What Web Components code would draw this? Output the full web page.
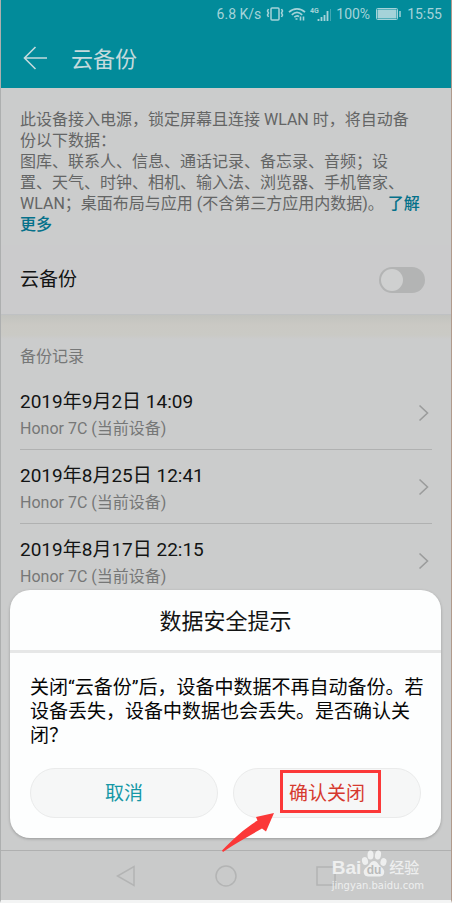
<!DOCTYPE html>
<html lang="zh-CN">
<head>
<meta charset="utf-8">
<meta name="viewport" content="width=device-width, initial-scale=1">
<title>云备份</title>
<style>
  body {
    margin: 0;
    background: #f3f4f4;
    font-family: Roboto, "Noto Sans CJK SC", sans-serif;
  }
</style>
</head>
<body>

<phone-screen>
  <status-bar slot="top"></status-bar>
  <app-bar slot="top">云备份</app-bar>

  <backup-info>
    此设备接入电源，锁定屏幕且连接 WLAN 时，将自动备<br>份以下数据：<br>图库、联系人、信息、通话记录、备忘录、音频；设<br>置、天气、时钟、相机、输入法、浏览器、手机管家、<br>WLAN；桌面布局与应用 (不含第三方应用内数据)。 <a href="#more">了解<br>更多</a>
  </backup-info>
  <switch-row>云备份</switch-row>
  <record-list>
    <span slot="title">备份记录</span>
    <record-row>2019年9月2日 14:09<span slot="device">Honor 7C (当前设备)</span></record-row>
    <record-row>2019年8月25日 12:41<span slot="device">Honor 7C (当前设备)</span></record-row>
    <record-row>2019年8月17日 22:15<span slot="device">Honor 7C (当前设备)</span></record-row>
  </record-list>

  <bottom-dialog slot="overlay">
    <span slot="title">数据安全提示</span>
    关闭“云备份”后，设备中数据不再自动备份。若<br>设备丢失，设备中数据也会丢失。是否确认关<br>闭？
    <dialog-button slot="actions">取消</dialog-button>
    <dialog-button slot="actions" danger marked>确认关闭</dialog-button>
  </bottom-dialog>
  <nav-bar slot="bottom"></nav-bar>
  <water-mark slot="overlay"></water-mark>
</phone-screen>

<script>
  (function (customElements) {
    'use strict';

    // Registers an element that only needs markup and styles
    function define(name, html) {
      customElements.define(name, class extends HTMLElement {
        constructor() {
          super();
          this.attachShadow({mode: 'open'}).innerHTML = html;
        }
      });
    }

    define('phone-screen', `
      <style>
        :host {
          display: flex;
          flex-direction: column;
          position: relative;
          box-sizing: border-box;
          min-height: 100vh;
          border-left: 1px solid #adafaf;
          border-right: 1px solid #b09a8c;
          border-bottom: 3px solid #f3f4f4;
          background: #cbcccc;
        }
        main { flex: 1; height: 0; overflow: hidden; }
      </style>
      <slot name="top"></slot>
      <main><slot></slot></main>
      <slot name="bottom"></slot>
      <slot name="overlay"></slot>
    `);

    define('status-bar', `
      <style>
        :host {
          display: flex;
          align-items: center;
          justify-content: flex-end;
          gap: 4px;
          height: 28px;
          padding-right: 9px;
          background: #028b9a;
          color: #a5d3d9;
          font-size: 14px;
          line-height: 20px;
        }
        svg { display: block; fill: none; stroke: currentColor; }
        .battery { margin: 0 2px; }
        .rate { margin-right: 1px; }
      </style>
      <span class="rate">6.8 K/s</span>
      <svg width="18" height="14" viewBox="0 0 18 14" stroke-width="1.5">
        <rect x="5" y="1" width="8" height="12" rx="1"/>
        <path d="M2.500 2l-1 2 1 2-1 2 1 2M15.500 2l1 2-1 2 1 2-1 2" stroke-width="1.600"/>
      </svg>
      <svg width="18" height="14" viewBox="0 0 18 14" stroke-width="1.700">
        <path d="M1 5.200C5.500 0.700 12.500 0.700 17 5.200M3.800 7.800C7 4.800 11 4.800 14.200 7.800M6.300 10.200C8 8.700 10 8.700 11 9.500"/>
        <path d="M7.500 12h2M12.500 9.500v4M15.500 9.500v4" stroke-width="1.600"/>
      </svg>
      <svg width="22" height="16" viewBox="0 0 22 16">
        <text x="0" y="7" font-size="7" font-weight="700" fill="currentColor" stroke="none">4G</text>
        <path d="M8.500 15v-2M11.500 15v-4M14.500 15v-6M17.500 15V5" stroke-width="1.800"/>
        <path d="M20.500 15V3" stroke-width="1" opacity=".4"/>
      </svg>
      <span>100%</span>
      <svg class="battery" width="25" height="12" viewBox="0 0 25 12">
        <rect x=".5" y=".5" width="21" height="11" rx="1"/>
        <rect x="1.500" y="1.500" width="19" height="9" fill="currentColor" stroke="none"/>
        <path d="M24 3v6" stroke-width="1.500"/>
      </svg>
      <span>15:55</span>
    `);

    define('app-bar', `
      <style>
        :host {
          display: flex;
          align-items: center;
          gap: 23px;
          height: 60px;
          padding-left: 22px;
          background: #028b9a;
          color: #c4dadd;
        }
        button { padding: 0; border: 0; background: none; color: inherit; }
        svg { display: block; }
        h1 { margin: 0; padding-top: 3px; font-size: 22px; line-height: 30px; font-weight: 400; }
      </style>
      <button aria-label="返回">
        <svg width="25" height="24" viewBox="0 0 25 24" fill="none" stroke="currentColor" stroke-width="1.600">
          <path d="M24 12H2M12.500 1L1.500 12l11 11"/>
        </svg>
      </button>
      <h1><slot></slot></h1>
    `);

    define('backup-info', `
      <style>
        :host {
          display: block;
          padding: 21px 19px 10px;
          color: #646565;
          font-size: 16px;
          line-height: 21px;
          white-space: nowrap;
        }
        ::slotted(a) { color: #05718a; text-decoration: none; font-weight: 500; }
      </style>
      <slot></slot>
    `);

    define('switch-row', `
      <style>
        :host {
          display: block;
          padding: 14px 26px 13px 19px;
          background: #cbcbcc;
        }
        label {
          display: flex;
          align-items: center;
          justify-content: space-between;
          color: #131414;
          font-size: 19px;
          line-height: 42px;
        }
        input {
          appearance: none;
          box-sizing: border-box;
          width: 46px;
          height: 26px;
          margin: 0;
          padding: 2px;
          border-radius: 13px;
          background: #b3b4b4;
        }
        input::before {
          content: "";
          display: block;
          width: 22px;
          height: 22px;
          border-radius: 50%;
          background: #cfd0d0;
        }
        input:checked::before { margin-left: auto; }
      </style>
      <label><slot></slot><input type="checkbox" role="switch"></label>
    `);

    define('record-list', `
      <style>
        :host {
          display: block;
          padding: 0 19px;
          border-top: 1px solid #bfc1c3;
          background: linear-gradient(#c2c3bf, #cac9c4 10px, #cacac5 20px, #cbcccc 24px);
        }
        h2 {
          margin: 0;
          padding: 29px 0 6px;
          color: #767777;
          font-size: 16px;
          line-height: 26px;
          font-weight: 400;
        }
      </style>
      <h2><slot name="title"></slot></h2>
      <slot></slot>
    `);

    define('record-row', `
      <style>
        :host {
          display: flex;
          align-items: center;
          justify-content: space-between;
          padding: 13px 3px 6px 0;
          border-bottom: 1px solid #b0b1b1;
        }
        .date { color: #131414; font-size: 19px; line-height: 26px; }
        .device { color: #767777; font-size: 16px; line-height: 28px; }
        svg { display: block; margin-bottom: 6px; }
      </style>
      <div>
        <div class="date"><slot></slot></div>
        <div class="device"><slot name="device"></slot></div>
      </div>
      <svg width="11" height="18" viewBox="0 0 11 18" fill="none" stroke="#9b9c9c" stroke-width="1.600">
        <path d="M1.500 1.500L9.500 9l-8 7.500"/>
      </svg>
    `);

    define('bottom-dialog', `
      <style>
        :host {
          display: block;
          position: absolute;
          left: 9px;
          right: 10px;
          bottom: 62px;
          border-radius: 20px;
          background: #fdfefe;
          box-shadow: 0 1px 3px rgba(0, 0, 0, .25);
        }
        h2 {
          margin: 0;
          padding-top: 4px;
          border-bottom: 3px solid #e6e7e7;
          color: #131414;
          font-size: 22px;
          line-height: 56px;
          font-weight: 400;
          text-align: center;
        }
        .text {
          padding: 23px 20px 20px;
          color: #060606;
          font-size: 19px;
          line-height: 24px;
          white-space: nowrap;
        }
        .actions { display: flex; gap: 15px; padding: 0 20px 20px; }
      </style>
      <section role="dialog" aria-labelledby="title">
        <h2 id="title"><slot name="title"></slot></h2>
        <div class="text"><slot></slot></div>
        <div class="actions"><slot name="actions"></slot></div>
      </section>
    `);

    define('dialog-button', `
      <style>
        :host { display: block; flex: 1; position: relative; }
        button {
          display: block;
          box-sizing: border-box;
          width: 100%;
          height: 50px;
          padding: 0 0 3px;
          border: 1px solid #eaebeb;
          border-radius: 25px;
          background: #f6f7f7;
          color: #1598a6;
          font: inherit;
          font-size: 19px;
        }
        :host([danger]) button { color: #d6392f; }
        /* red frame and arrow pointing at the button */
        .mark, .arrow { display: none; }
        :host([marked]) .mark {
          display: block;
          position: absolute;
          top: 2px;
          left: 47px;
          right: 40px;
          height: 37px;
          border: 3px solid #fb3838;
          pointer-events: none;
        }
        :host([marked]) .arrow {
          display: block;
          position: absolute;
          top: 44px;
          left: -12px;
          z-index: 1;
        }
      </style>
      <button><slot></slot></button>
      <span class="mark"></span>
      <svg class="arrow" width="54" height="41" viewBox="0 0 54 41" fill="#fb3838">
        <path d="M53 1L35 5l1.500 3.500C24 16 12 27 1 38.500l1 1.500C15 31 28 24 41 16.500l4 3z"/>
      </svg>
    `);

    define('nav-bar', `
      <style>
        :host {
          display: flex;
          align-items: center;
          justify-content: center;
          gap: 76px;
          height: 49px;
          border-top: 1px solid #afb0b0;
          background: #c9caca;
        }
        button { padding: 0; border: 0; background: none; }
        svg { display: block; fill: none; stroke: #b3b4b4; stroke-width: 1.5; }
      </style>
      <button aria-label="返回"><svg width="24" height="24" viewBox="0 0 24 24"><path d="M20 2.500v19L3.500 12z"/></svg></button>
      <button aria-label="主页"><svg width="24" height="24" viewBox="0 0 24 24"><circle cx="12" cy="12" r="10"/></svg></button>
      <button aria-label="最近任务"><svg width="24" height="24" viewBox="0 0 24 24"><rect x="3" y="3" width="18" height="18"/></svg></button>
    `);

    define('water-mark', `
      <style>
        :host {
          display: block;
          position: absolute;
          right: 27px;
          bottom: 8px;
          color: #eeefef;
          pointer-events: none;
        }
        .brand { display: flex; align-items: flex-end; height: 30px; }
        .bai { font: 700 19px/24px "Liberation Sans", sans-serif; }
        .name { margin-left: 2px; font-size: 15px; line-height: 24px; font-weight: 500; }
        .url { font: 10px/12px "DejaVu Sans", sans-serif; }
        svg { display: block; }
      </style>
      <div class="brand">
        <span class="bai">Bai</span>
        <svg width="26" height="30" viewBox="0 0 26 30" fill="currentColor">
          <ellipse cx="4" cy="11" rx="3" ry="4" transform="rotate(-15 4 11)"/>
          <ellipse cx="9.500" cy="5" rx="3" ry="4.500"/>
          <ellipse cx="17" cy="5" rx="3" ry="4.500" transform="rotate(10 17 5)"/>
          <ellipse cx="22.500" cy="12" rx="3" ry="4" transform="rotate(15 22.500 12)"/>
          <path d="M13 11c3 0 4 3 6 5 3 2.500 5 4 4 7.500-1 3.500-4 3-10 3s-9 .5-10-3c-1-3.500 1-5 4-7.500 2-2 3-5 6-5z"/>
          <text x="13" y="24" text-anchor="middle" font-family="Liberation Sans" font-size="12" font-weight="700" fill="#b9baba">du</text>
        </svg>
        <span class="name">经验</span>
      </div>
      <div class="url">jingyan.baidu.com</div>
    `);
  })(window.customElements);
</script>
</body>
</html>
